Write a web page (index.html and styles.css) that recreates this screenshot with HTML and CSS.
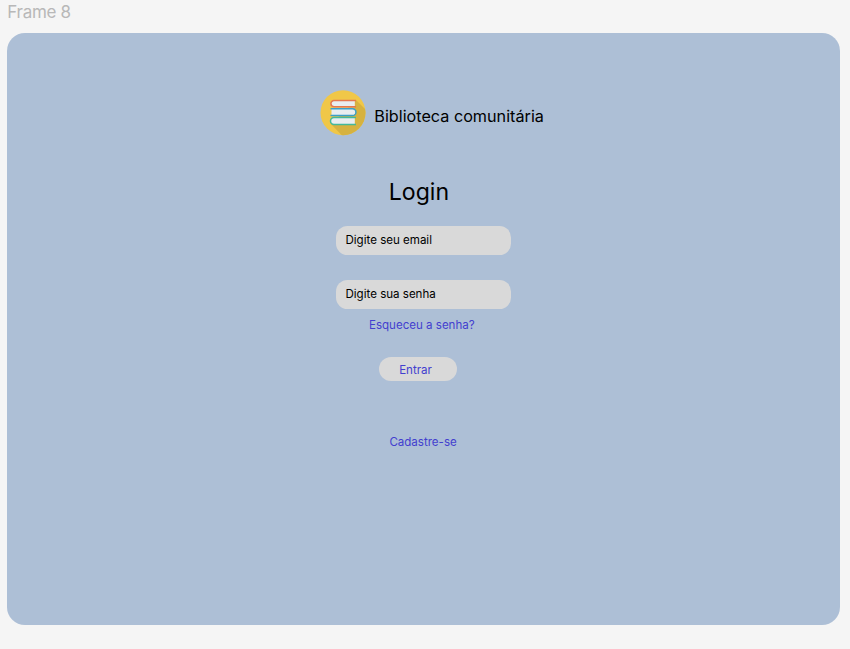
FILE: index.html
```html
<!DOCTYPE html>
<html lang="pt-BR">
<head>
<meta charset="utf-8">
<title>Biblioteca comunitária</title>
<link rel="stylesheet" href="styles.css">
</head>
<body>
<div class="frame-label">Frame 8</div>
<main class="frame">
  <header class="brand">
    <svg class="logo" viewBox="0 0 46 46" aria-hidden="true">
      <defs><clipPath id="disc"><circle cx="23" cy="22.7" r="22.5"/></clipPath></defs>
      <circle cx="23" cy="22.7" r="22.5" fill="#f0c748"/>
      <path d="M36 10L58 32V58H34L11 34Z" fill="#d6b240" clip-path="url(#disc)"/>
      <g fill="#e9edf0" stroke-width="1.5">
        <path d="M34.8 10.8H14a3.2 3.2 0 0 0 0 6.4H34.8Z" stroke="none"/>
        <path d="M36 10.5H14a3 3 0 0 0 0 6.2H36" fill="none" stroke="#e5774f"/>
        <path d="M11.5 19H32.5a3.1 3.1 0 0 1 0 6.2H11.5Z" stroke="none"/>
        <path d="M10.5 18.7H32.5a3.4 3.4 0 0 1 0 6.9H10.5" fill="none" stroke="#3b9fc9"/>
        <path d="M34.8 27.7H14a3.2 3.2 0 0 0 0 6.4H34.8Z" stroke="none"/>
        <path d="M36 27.5H14a3.5 3.5 0 0 0 0 7H36" fill="none" stroke="#43b99a"/>
      </g>
    </svg>
    <span class="brand-name">Biblioteca comunitária</span>
  </header>
  <form class="login">
    <h1 class="title">Login</h1>
    <input class="field" type="text" placeholder="Digite seu email">
    <input class="field field-password" type="password" placeholder="Digite sua senha">
    <a class="link forgot">Esqueceu a senha?</a>
    <button class="submit" type="button">Entrar</button>
    <a class="link register">Cadastre-se</a>
  </form>
</main>
</body>
</html>
```
FILE: styles.css
```css
* { box-sizing: border-box; }
body {
  margin: 0;
  height: 649px;
  padding: 0 10.4px 0 7.3px;
  background: #f5f5f5;
  font-family: Inter, sans-serif;
  color: #000;
  overflow: hidden;
}
.frame-label {
  height: 33.3px;
  padding-top: 2px;
  font-size: 17px;
  line-height: 20px;
  letter-spacing: -0.3px;
  color: #b8b8b8;
}
.frame {
  height: 591.7px;
  border-radius: 18px;
  background: #adbfd6;
  padding: 56.7px 0 0 313px;
}
.brand {
  display: flex;
  align-items: center;
  height: 46px;
}
.logo { width: 46px; height: 46px; flex: none; }
.brand-name {
  margin: 6px 0 0 8px;
  font-size: 16.2px;
  line-height: 20px;
}
.login {
  display: flex;
  flex-direction: column;
  align-items: flex-start;
  width: 176px;
  margin: 41px 0 0 15.7px;
}
.title {
  margin: 0 0 18.6px 52.8px;
  font-size: 23.1px;
  line-height: 30px;
  font-weight: 400;
}
.field {
  width: 175.4px;
  height: 29px;
  padding: 0 9.5px;
  border: 0;
  border-radius: 11.5px;
  background: #d9d9d9;
  font: 11.56px/14px Inter, sans-serif;
}
.field::placeholder { color: #000; opacity: 1; }
.field-password { margin-top: 25.4px; }
.link, .submit {
  font: 11.56px/14px Inter, sans-serif;
  color: #4340cf;
}
.forgot { margin: 9.4px 0 0 33px; }
.submit {
  width: 78px;
  height: 24px;
  margin: 24.8px 0 0 43px;
  padding: 1px 5px 0 0;
  border: 0;
  border-radius: 12px;
  background: #d9d9d9;
}
.register { margin: 53.5px 0 0 53.4px; }
```
